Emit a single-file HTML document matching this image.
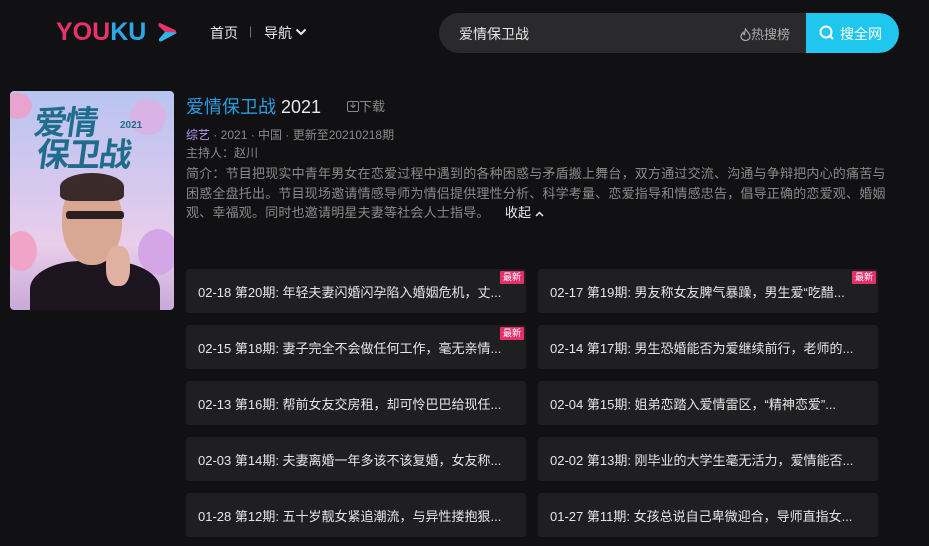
<!DOCTYPE html>
<html><head><meta charset="utf-8"><style>
*{margin:0;padding:0;box-sizing:border-box}
body{width:929px;height:546px;background:#111113;font-family:"Liberation Sans","Noto Sans CJK SC",sans-serif;color:#ccc;position:relative;overflow:hidden}
.abs{position:absolute}
.logo{left:56px;top:18px;font-weight:bold;font-size:25px;letter-spacing:0px;line-height:28px}
.nav{top:23px;font-size:14px;color:#e8e8e8}
.search{left:439px;top:13px;width:460px;height:40px;border-radius:20px;background:#2a2a2c;overflow:hidden}
.search .q{position:absolute;left:20px;top:11px;font-size:14px;color:#e6e6e6}
.search .hot{position:absolute;left:301px;top:11px;font-size:13px;color:#aaa}
.search .btn{position:absolute;left:367px;top:0;width:93px;height:40px;background:#1fc7ee;color:#fff;font-size:14px;border-radius:0 20px 20px 0}
.poster{left:10px;top:91px;width:164px;height:219px;border-radius:4px;overflow:hidden;background:linear-gradient(180deg,#b8c4f0 0%,#d8c8ef 45%,#e9cfe9 70%,#c8a8d8 100%)}
.card{position:absolute;width:340px;height:44px;background:#1f1f22;border-radius:3px;font-size:13px;color:#e6e6e6;padding:13px 0 0 12px;white-space:nowrap}
.badge{position:absolute;right:2px;top:2px;background:#e5316b;color:#fff;font-size:9px;padding:1px 3px;line-height:11px;border-radius:1px}
.desc{left:186px;top:164px;font-size:13px;line-height:19.5px;color:#8a8a8a;letter-spacing:0.2px;white-space:nowrap}
</style></head><body>
<div class="abs logo"><span style="color:#e8336a">YOU</span><span style="color:#2aa9e6">KU</span></div>
<svg class="abs" style="left:156px;top:21px" width="22" height="22" viewBox="0 0 22 22"><path d="M4 2 L19 9 Q21.5 11 19 13 L6 20 Q2.5 21.5 3 18 L9 11 L3 5.5 Q1.5 2 4 2Z" fill="#e8336a"/><path d="M9 11 L20.5 11.5 Q20.5 12.5 19 13 L6 20 Q2.5 21.5 3 18Z" fill="#2ab8ea"/></svg>
<div class="abs nav" style="left:210px">首页</div>
<div class="abs nav" style="left:249px;color:#777;font-size:12px;top:24px">|</div>
<div class="abs nav" style="left:264px">导航</div>
<svg class="abs" style="left:295px;top:28px" width="12" height="8"><path d="M1.5 1.5 L6 6 L10.5 1.5" stroke="#e8e8e8" stroke-width="2" fill="none"/></svg>
<div class="abs search"><span class="q">爱情保卫战</span>
<span class="hot"><svg width="11" height="13" viewBox="0 0 11 13" style="vertical-align:-2px"><path d="M5.5 1 C7 4 10 5.5 10 8.5 A4.5 4 0 0 1 1 8.5 C1 6.5 2.5 5.5 3 4.5 C3.5 6 4 6.5 4.5 6.5 C4.5 4.5 5 3 5.5 1Z" stroke="#aaa" fill="none" stroke-width="1.2"/></svg>热搜榜</span>
<div class="btn"><svg width="16" height="16" style="position:absolute;left:13px;top:12px" viewBox="0 0 16 16"><circle cx="7" cy="7" r="5.5" stroke="#fff" stroke-width="2" fill="none"/><path d="M11 11 L14 14" stroke="#fff" stroke-width="2"/></svg><span style="position:absolute;left:34px;top:11px">搜全网</span></div></div>

<div class="abs poster">
<div class="abs" style="left:-8px;top:2px;width:30px;height:26px;border-radius:50%;background:#e8a3cf"></div>
<div class="abs" style="left:120px;top:8px;width:36px;height:36px;border-radius:50%;background:#d9b3e6"></div>
<div class="abs" style="left:22px;top:16px;font-size:33px;font-weight:bold;color:#1f6c8c;line-height:32px;transform:skewX(-8deg);letter-spacing:-2px">爱情<br>&nbsp;保卫战</div>
<div class="abs" style="left:110px;top:29px;font-size:10px;font-weight:bold;color:#1f6c8c">2021</div>
<div class="abs" style="left:-5px;top:140px;width:32px;height:40px;border-radius:50%;background:#f0a4c8"></div>
<div class="abs" style="left:128px;top:138px;width:40px;height:46px;border-radius:50%;background:#d4a6e6"></div>
<div class="abs" style="left:20px;top:170px;width:130px;height:70px;border-radius:40% 40% 0 0;background:#1c1520"></div>
<div class="abs" style="left:52px;top:88px;width:60px;height:86px;border-radius:45% 45% 48% 48%;background:#d8a894"></div>
<div class="abs" style="left:50px;top:82px;width:64px;height:28px;border-radius:50% 50% 20% 20%;background:#3a2a2a"></div>
<div class="abs" style="left:56px;top:120px;width:58px;height:8px;background:#2a2020;border-radius:3px"></div>
<div class="abs" style="left:96px;top:155px;width:24px;height:40px;border-radius:40%;background:#e0b0a0"></div>
</div>

<div class="abs" style="left:186px;top:93px;font-size:18px;color:#e8e8e8"><span style="color:#2a9de0">爱情保卫战</span> 2021</div>
<div class="abs" style="left:347px;top:96px;font-size:13px;color:#888"><svg width="12" height="12" viewBox="0 0 12 12" style="vertical-align:-1px"><rect x="0.5" y="1.5" width="11" height="10" rx="1.5" stroke="#888" fill="none"/><path d="M6 1 V7 M3.5 5 L6 7.5 L8.5 5" stroke="#888" fill="none"/></svg>下载</div>
<div class="abs" style="left:186px;top:126px;font-size:12px;color:#8a8a8a"><span style="color:#b69cf0">综艺</span> · 2021 · 中国 · 更新至20210218期</div>
<div class="abs" style="left:186px;top:144px;font-size:12px;color:#8a8a8a">主持人：赵川</div>
<div class="abs desc">简介：节目把现实中青年男女在恋爱过程中遇到的各种困惑与矛盾搬上舞台，双方通过交流、沟通与争辩把内心的痛苦与<br>困惑全盘托出。节目现场邀请情感导师为情侣提供理性分析、科学考量、恋爱指导和情感忠告，倡导正确的恋爱观、婚姻<br>观、幸福观。同时也邀请明星夫妻等社会人士指导。 &nbsp; &nbsp;<span style="color:#e8e8e8">收起</span> <svg width="9" height="6"><path d="M1 5 L4.5 1.5 L8 5" stroke="#e8e8e8" stroke-width="1.5" fill="none"/></svg></div>

<div class="card" style="left:186px;top:269px">02-18 第20期: 年轻夫妻闪婚闪孕陷入婚姻危机，丈...<span class="badge">最新</span></div>
<div class="card" style="left:538px;top:269px">02-17 第19期: 男友称女友脾气暴躁，男生爱“吃醋...<span class="badge">最新</span></div>
<div class="card" style="left:186px;top:325px">02-15 第18期: 妻子完全不会做任何工作，毫无亲情...<span class="badge">最新</span></div>
<div class="card" style="left:538px;top:325px">02-14 第17期: 男生恐婚能否为爱继续前行，老师的...</div>
<div class="card" style="left:186px;top:381px">02-13 第16期: 帮前女友交房租，却可怜巴巴给现任...</div>
<div class="card" style="left:538px;top:381px">02-04 第15期: 姐弟恋踏入爱情雷区，“精神恋爱”...</div>
<div class="card" style="left:186px;top:437px">02-03 第14期: 夫妻离婚一年多该不该复婚，女友称...</div>
<div class="card" style="left:538px;top:437px">02-02 第13期: 刚毕业的大学生毫无活力，爱情能否...</div>
<div class="card" style="left:186px;top:493px">01-28 第12期: 五十岁靓女紧追潮流，与异性搂抱狠...</div>
<div class="card" style="left:538px;top:493px">01-27 第11期: 女孩总说自己卑微迎合，导师直指女...</div>
</body></html>
